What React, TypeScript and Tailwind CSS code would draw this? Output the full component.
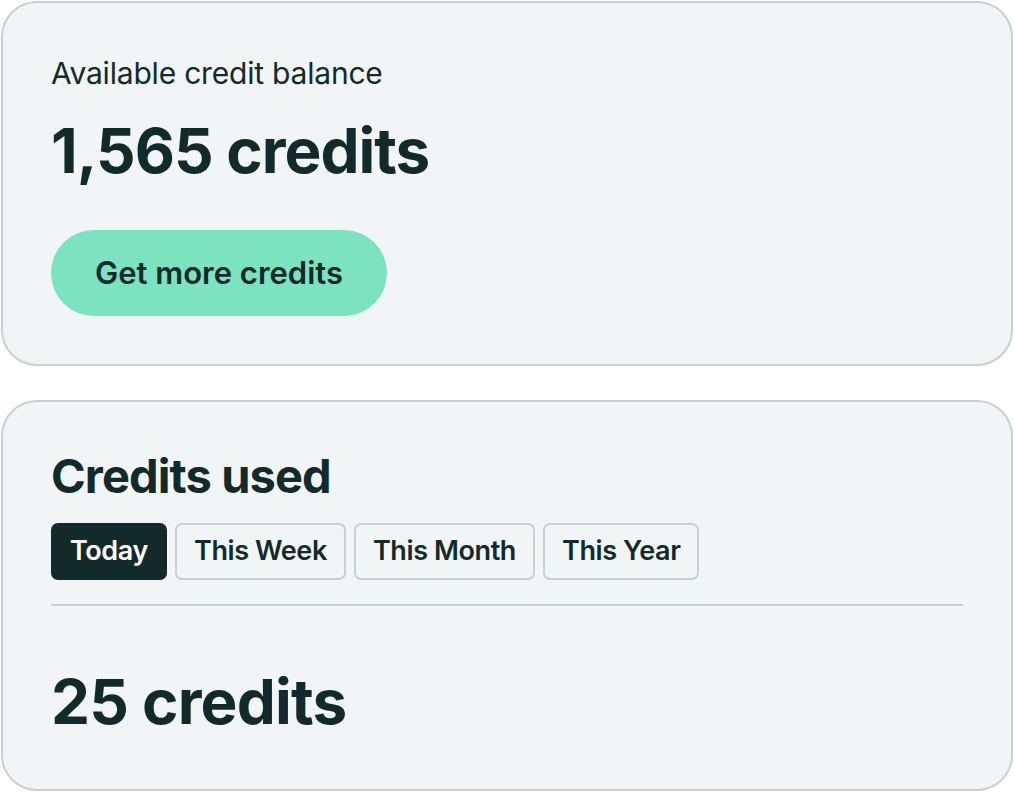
export default function App() {
  const tabs = ["Today", "This Week", "This Month", "This Year"];
  return (
    <div
      className="w-[1014px] h-[799px] bg-white p-px flex flex-col gap-[34px] text-[#132a2a]"
      style={{ fontFamily: "Inter, 'Noto Sans', sans-serif" }}
    >
      <section className="h-[365px] rounded-[36px] border-2 border-[#c9d1d0] bg-[#f1f5f6] px-12 pt-[48px]">
        <p className="text-[30px] leading-[44px] tracking-[-0.2px]">Available credit balance</p>
        <h1 className="mt-[20px] text-[62px] leading-[72px] font-bold tracking-[-1px]">1,565 credits</h1>
        <button
          type="button"
          className="mt-[43px] h-[86px] px-11 rounded-full bg-[#7be3c0] text-[31px] font-semibold"
        >
          Get more credits
        </button>
      </section>

      <section className="h-[391px] rounded-[36px] border-2 border-[#c9d1d0] bg-[#f1f5f6] px-12 pt-[46px]">
        <h2 className="text-[47px] leading-[56px] font-bold tracking-[-0.9px]">Credits used</h2>
        <div className="mt-[19px] flex gap-[8px]">
          {tabs.map((t, i) => (
            <button
              key={t}
              type="button"
              className={
                i === 0
                  ? "h-[57px] px-[19px] rounded-[7px] bg-[#132a2a] text-white text-[27px] font-semibold tracking-[-0.4px]"
                  : "h-[57px] px-[17px] rounded-[7px] border-2 border-[#c9d1d0] text-[27px] font-semibold tracking-[-0.4px]"
              }
            >
              {t}
            </button>
          ))}
        </div>
        <div className="mt-[24px] h-[2px] bg-[#c9d1d0]" />
        <p className="mt-[60px] text-[62px] leading-[72px] font-bold tracking-[-0.8px]">25 credits</p>
      </section>
    </div>
  );
}
